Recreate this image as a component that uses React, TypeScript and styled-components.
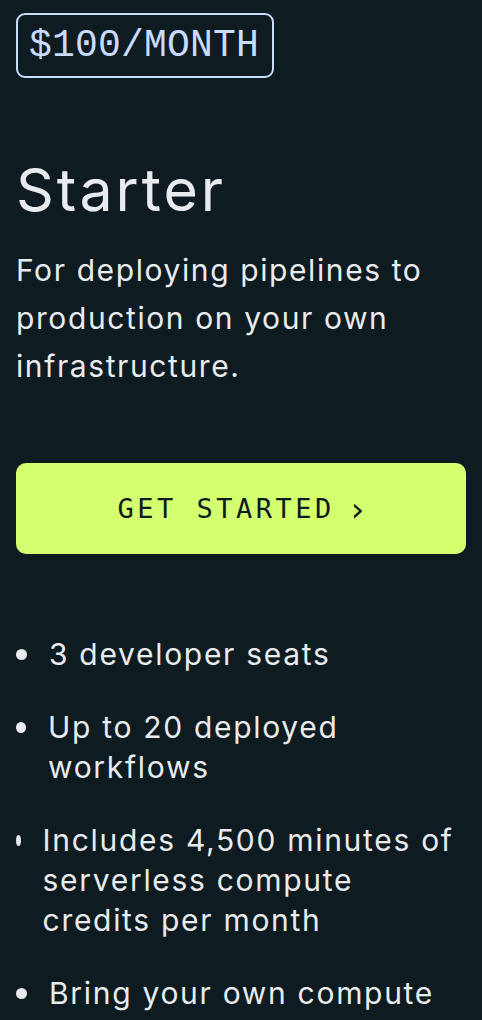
import React from 'react';
import styled, { createGlobalStyle } from 'styled-components';

const GlobalStyle = createGlobalStyle`
  html, body {
    margin: 0;
    padding: 0;
    background: #0e1b20;
  }

  * {
    box-sizing: border-box;
  }
`;

const Card = styled.section`
  display: flex;
  flex-direction: column;

  padding: 13px 16px 0;
  min-height: 1020px;

  background: #0e1b20;
  color: #e9ebee;
  font-family: Inter, 'Liberation Sans', sans-serif;
`;

const PriceTag = styled.div`
  align-self: flex-start;

  padding: 10px 13px 10px 11px;

  border: 2px solid #c7dcff;
  border-radius: 9px;

  color: #c7dcff;
  font-family: 'Liberation Mono', monospace;
  font-size: 38px;
  line-height: 41px;
  letter-spacing: 0.2px;
`;

const PlanName = styled.h2`
  margin: 78px 0 0;

  font-size: 59px;
  font-weight: 400;
  line-height: 68px;
  letter-spacing: 3px;
`;

const PlanText = styled.p`
  margin: 22px 0 0;

  font-size: 30px;
  font-weight: 400;
  line-height: 48px;
  letter-spacing: 1.6px;
`;

const StartButton = styled.button`
  display: flex;
  justify-content: center;
  align-items: center;
  gap: 16px;

  margin-top: 73px;
  width: 100%;
  height: 91px;

  border: none;
  border-radius: 10px;
  background: #d4ff6e;

  color: #0e1b20;
  font-family: 'DejaVu Sans Mono', monospace;
  font-size: 27px;
  letter-spacing: 3.5px;
`;

const Chevron = styled.span`
  font-family: 'DejaVu Sans', sans-serif;
  font-size: 34px;
  line-height: 1;
  letter-spacing: 0;
`;

const FeatureList = styled.ul`
  display: flex;
  flex-direction: column;
  gap: 33px;

  margin: 80px 0 0;
  padding: 0;

  list-style: none;
`;

const FeatureItem = styled.li`
  display: flex;
  align-items: flex-start;
  gap: 22px;

  font-size: 30px;
  line-height: 40px;
  letter-spacing: 1.7px;
`;

const Dot = styled.span`
  flex: 0 1 11px;

  margin-top: 15px;
  height: 11px;

  border-radius: 50%;
  background: #e9ebee;
`;

const features = [
  '3 developer seats',
  'Up to 20 deployed workflows',
  'Includes 4,500 minutes of serverless compute credits per month',
  'Bring your own compute',
];

const App = () => {
  return (
    <>
      <GlobalStyle />
      <Card>
        <PriceTag>
          $100/MONTH
        </PriceTag>
        <PlanName>
          Starter
        </PlanName>
        <PlanText>
          For deploying pipelines to production on your own infrastructure.
        </PlanText>
        <StartButton>
          GET STARTED
          <Chevron>›</Chevron>
        </StartButton>
        <FeatureList>
          {
            features.map((feature) => (
              <FeatureItem key={feature}>
                <Dot />
                <span>{feature}</span>
              </FeatureItem>
            ))
          }
        </FeatureList>
      </Card>
    </>
  );
};

export default App;
